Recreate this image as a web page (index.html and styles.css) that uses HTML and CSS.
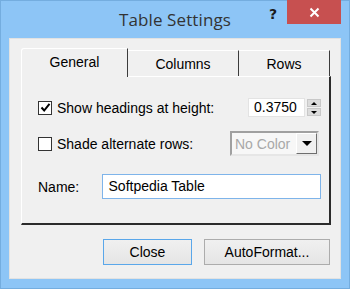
FILE: index.html
```html
<!DOCTYPE html>
<html lang="en">
<head>
    <meta charset="UTF-8">
    <title>Table Settings</title>
    <link rel="stylesheet" href="styles.css">
</head>
<body>
    <div class="window">
        <!-- Title bar -->
        <div class="titlebar">
            <div></div>
            <div class="title">Table Settings</div>
            <div class="caption-buttons">
                <span class="help-btn">?</span>
                <span class="close-btn">
                    <svg width="11" height="11" viewBox="0 0 11 11">
                        <path d="M1.5 1.5 L9.5 9.5 M9.5 1.5 L1.5 9.5" stroke="#fff" stroke-width="2"/>
                    </svg>
                </span>
            </div>
        </div>

        <!-- Client area -->
        <div class="client">
            <div class="tabs">
                <div class="tab active">General</div>
                <div class="tab tab-columns">Columns</div>
                <div class="tab tab-rows">Rows</div>
            </div>

            <div class="panel">
                <div class="row row-headings">
                    <label class="check">
                        <span class="box">
                            <svg width="11" height="11" viewBox="0 0 11 11">
                                <path d="M1.5 5.5 L4.2 8.5 L9.5 1.8" fill="none" stroke="#000" stroke-width="2"/>
                            </svg>
                        </span>
                        Show headings at height:
                    </label>
                    <div class="spin">
                        <div class="spin-input">0.3750</div>
                        <div class="spin-buttons">
                            <span class="spin-btn"><i class="arrow-up"></i></span>
                            <span class="spin-btn"><i class="arrow-down"></i></span>
                        </div>
                    </div>
                </div>

                <div class="row row-shade">
                    <label class="check">
                        <span class="box"></span>
                        Shade alternate rows:
                    </label>
                    <div class="combo">
                        <span class="combo-text">No Color</span>
                        <span class="combo-btn"><i class="arrow-down big"></i></span>
                    </div>
                </div>

                <div class="row row-name">
                    <span class="label">Name:</span>
                    <div class="text-input">Softpedia Table</div>
                </div>
            </div>

            <div class="buttons">
                <button class="btn btn-default">Close</button>
                <button class="btn btn-auto">AutoFormat...</button>
            </div>
        </div>
    </div>
</body>
</html>
```

FILE: styles.css
```css
* {
    margin: 0;
    padding: 0;
    box-sizing: border-box;
}

:root {
    --frame: #8dc5f6;
    --frame-edge: #74addf;
    --client: #f0f0f0;
    --text: #000000;
    --close-red: #c75050;
    --dark: #2b2b2b;
    --focus-blue: #7eb4ea;
}

body {
    width: 350px;
    height: 289px;
    overflow: hidden;
    background-color: var(--frame);
    font-family: "Liberation Sans", Arial, sans-serif;
    font-size: 14px;
    color: var(--text);
}

.window {
    width: 350px;
    height: 289px;
    display: flex;
    flex-direction: column;
    border: 1px solid var(--frame-edge);
}

/* Title bar */
.titlebar {
    height: 37px;
    display: grid;
    grid-template-columns: 1fr auto 1fr;
    align-items: start;
}

.title {
    font-family: "Open Sans", "Noto Sans", sans-serif;
    font-size: 17px;
    color: #333333;
    padding-top: 7px;
    letter-spacing: 0.1px;
}

.caption-buttons {
    display: flex;
    justify-content: flex-end;
    align-items: flex-start;
    padding-right: 8px;
}

.help-btn {
    width: 28px;
    height: 25px;
    font-family: "DejaVu Sans", sans-serif;
    font-weight: bold;
    font-size: 14px;
    color: #1a1a1a;
    display: flex;
    justify-content: center;
    padding-top: 5px;
}

.close-btn {
    width: 54px;
    height: 24px;
    margin-top: -1px;
    background-color: var(--close-red);
    display: flex;
    align-items: center;
    justify-content: center;
}

/* Client area */
.client {
    flex: 1;
    margin: 0 8px 9px 8px;
    background-color: var(--client);
    border: 1px solid #e2e2e2;
    padding: 9px 10px 13px 11px;
    display: flex;
    flex-direction: column;
}

/* Tabs */
.tabs {
    display: flex;
    align-items: flex-end;
    height: 28px;
    position: relative;
    z-index: 1;
}

.tab {
    height: 26px;
    display: flex;
    align-items: center;
    justify-content: center;
    border-top: 1px solid #ffffff;
    border-right: 1px solid #3c3c3c;
    background-color: var(--client);
}

.tab.active {
    width: 107px;
    height: 29px;
    margin-bottom: -1px;
    padding-bottom: 2px;
    border-left: 1px solid #ffffff;
    border-top-left-radius: 3px;
}

.tab-columns {
    width: 111px;
}

.tab-rows {
    width: 91px;
}

.panel {
    width: 310px;
    height: 149px;
    border-top: 1px solid #ffffff;
    border-left: 1px solid #ffffff;
    border-right: 2px solid var(--dark);
    border-bottom: 2px solid var(--dark);
    padding: 21px 8px 0 16px;
    display: flex;
    flex-direction: column;
}

.row {
    display: flex;
    align-items: center;
    justify-content: space-between;
}

.row-shade {
    margin-top: 14px;
}

.row-name {
    margin-top: 18px;
    justify-content: flex-start;
}

.check {
    display: flex;
    align-items: center;
    gap: 5px;
}

.box {
    width: 14px;
    height: 14px;
    border: 1px solid #333333;
    background-color: #ffffff;
    display: flex;
    align-items: center;
    justify-content: center;
}

/* Spinner */
.spin {
    display: flex;
    gap: 2px;
}

.spin-input {
    width: 57px;
    height: 19px;
    background-color: #ffffff;
    border: 1px solid #e3e3e3;
    padding-left: 5px;
    line-height: 17px;
}

.spin-buttons {
    display: flex;
    flex-direction: column;
    gap: 1px;
    padding-top: 1px;
}

.spin-btn {
    width: 14px;
    height: 8px;
    background-color: #dcdcdc;
    border: 1px solid #c8c8c8;
    display: flex;
    align-items: center;
    justify-content: center;
}

.arrow-up,
.arrow-down {
    width: 0;
    height: 0;
    border-left: 3px solid transparent;
    border-right: 3px solid transparent;
}

.arrow-up {
    border-bottom: 3px solid #000000;
}

.arrow-down {
    border-top: 3px solid #000000;
}

.arrow-down.big {
    border-left-width: 5px;
    border-right-width: 5px;
    border-top-width: 5px;
}

/* Combo */
.combo {
    width: 89px;
    height: 25px;
    border: 2px solid #a0a0a0;
    border-right-color: #e6e6e6;
    border-bottom-color: #e6e6e6;
    background-color: #f7f7f7;
    display: flex;
    align-items: center;
    margin-right: 2px;
}

.combo-text {
    flex: 1;
    padding-left: 3px;
    color: #a8a8a8;
    font-size: 14px;
}

.combo-btn {
    width: 21px;
    height: 21px;
    background-color: #f0f0f0;
    border-top: 1px solid #ffffff;
    border-left: 1px solid #ffffff;
    border-right: 1px solid #6e6e6e;
    border-bottom: 1px solid #6e6e6e;
    display: flex;
    align-items: center;
    justify-content: center;
}

/* Name */
.label {
    width: 64px;
}

.text-input {
    width: 221px;
    height: 25px;
    background-color: #ffffff;
    border: 1px solid var(--focus-blue);
    padding-left: 6px;
    line-height: 23px;
    font-size: 14px;
}

/* Buttons */
.buttons {
    margin-top: 14px;
    display: flex;
    justify-content: flex-end;
    gap: 12px;
}

.btn {
    height: 26px;
    font-family: "Liberation Sans", Arial, sans-serif;
    font-size: 14px;
    color: #000000;
    background: linear-gradient(#f0f0f0, #e5e5e5);
    border: 1px solid #acacac;
}

.btn-default {
    width: 89px;
    border-color: #5aa7ea;
}

.btn-auto {
    width: 126px;
}
```
